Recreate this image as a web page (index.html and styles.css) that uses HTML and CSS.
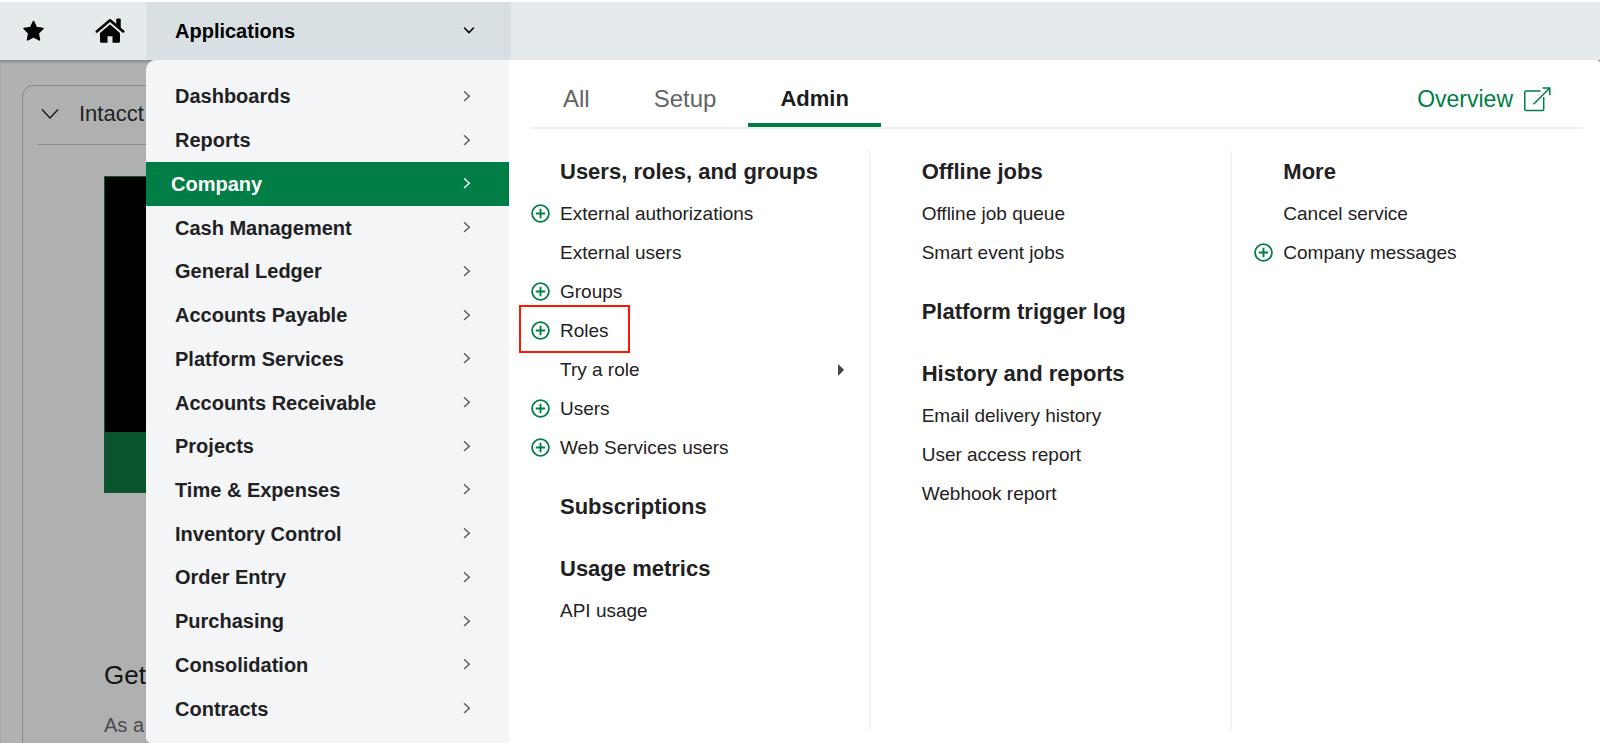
FILE: index.html
```html
<!DOCTYPE html>
<html lang="en">
<head>
<meta charset="utf-8">
<title>Applications</title>
<link rel="stylesheet" href="styles.css">
</head>
<body>
<svg class="defs" aria-hidden="true">
  <symbol id="right" viewBox="0 0 12 12"><path d="M3.500 .8 8.300 5.200 3.500 9.600" fill="none" stroke="currentColor" stroke-width="1.400" stroke-linecap="round"/></symbol>
  <symbol id="plus" viewBox="0 0 19 19"><circle cx="9.500" cy="9.500" r="8.400" fill="none" stroke="currentColor" stroke-width="1.800"/><path d="M9.500 4.800v9.400M4.800 9.500h9.400" stroke="currentColor" stroke-width="1.900"/></symbol>
</svg>
<header class="topbar">
  <button class="icon-btn" aria-label="Favorites"><svg width="22" height="22" viewBox="0 0 22 22"><path d="M11.500 1.500 14.400 7.600 21 8.500 16.200 13.100 17.400 19.900 11.500 16.700 5.600 19.900 6.800 13.100 2 8.500 8.600 7.600Z" fill="#000" stroke="#000" stroke-width="1.600" stroke-linejoin="round"/></svg></button>
  <a class="home" href="#" aria-label="Home"><svg width="30" height="26" viewBox="0 0 30 26"><path d="M1.800 13.400 15 2.300 28.200 13.400" fill="none" stroke="#000" stroke-width="2.600" stroke-linecap="round" stroke-linejoin="round"/><path d="M21.800 1h3.400v8.800l-3.400-2.900Z" fill="#000" stroke="#000" stroke-linejoin="round"/><path d="M15 6.600 5 15v8.200q0 1.500 1.500 1.500h6v-6.500h5v6.500h6q1.500 0 1.500-1.500V15Z" fill="#000"/></svg></a>
  <button class="app-btn" aria-expanded="true">Applications
    <svg width="12" height="12" viewBox="0 0 12 12"><path d="M1.500 3 6 7.600 10.500 3" fill="none" stroke="#000" stroke-width="1.500" stroke-linecap="round"/></svg>
  </button>
</header>
<main class="stage">
  <section class="workspace">
    <article class="card">
      <header class="card-head">
        <svg width="18" height="12" viewBox="0 0 18 12"><path d="M1 1.500 9 10 17 1.500" fill="none" stroke="#1c1c1c" stroke-width="1.500"/></svg>
        <span>Intacct</span>
      </header>
      <div class="card-body">
        <div class="promo"><div class="promo-screen"></div></div>
        <h2 class="promo-title">Get</h2>
        <p class="promo-text">As a</p>
      </div>
    </article>
  </section>

  <div class="menu">
    <nav class="apps" aria-label="Applications">
      <a href="#">Dashboards<svg class="chev"><use href="#right"/></svg></a>
      <a href="#">Reports<svg class="chev"><use href="#right"/></svg></a>
      <a href="#" class="current">Company<svg class="chev"><use href="#right"/></svg></a>
      <a href="#">Cash Management<svg class="chev"><use href="#right"/></svg></a>
      <a href="#">General Ledger<svg class="chev"><use href="#right"/></svg></a>
      <a href="#">Accounts Payable<svg class="chev"><use href="#right"/></svg></a>
      <a href="#">Platform Services<svg class="chev"><use href="#right"/></svg></a>
      <a href="#">Accounts Receivable<svg class="chev"><use href="#right"/></svg></a>
      <a href="#">Projects<svg class="chev"><use href="#right"/></svg></a>
      <a href="#">Time &amp; Expenses<svg class="chev"><use href="#right"/></svg></a>
      <a href="#">Inventory Control<svg class="chev"><use href="#right"/></svg></a>
      <a href="#">Order Entry<svg class="chev"><use href="#right"/></svg></a>
      <a href="#">Purchasing<svg class="chev"><use href="#right"/></svg></a>
      <a href="#">Consolidation<svg class="chev"><use href="#right"/></svg></a>
      <a href="#">Contracts<svg class="chev"><use href="#right"/></svg></a>
    </nav>

    <div class="panel">
      <div class="tabs">
        <button class="tab">All</button>
        <button class="tab">Setup</button>
        <button class="tab active">Admin</button>
        <a class="overview" href="#">Overview
          <svg width="28" height="26" viewBox="0 0 28 26"><path d="M17.500 4H3q-1.200 0-1.200 1.200V22.300q0 1.200 1.200 1.200H19.500q1.200 0 1.200-1.200V10M10.500 17.300 26.500 1.300M19.500 1H26.800V8.300" fill="none" stroke="currentColor" stroke-width="1.500"/></svg>
        </a>
      </div>
      <div class="columns">
        <div class="column">
          <section class="group">
            <h3>Users, roles, and groups</h3>
            <ul>
              <li><button class="add" aria-label="Add external authorization"><svg><use href="#plus"/></svg></button><a href="#">External authorizations</a></li>
              <li><a href="#">External users</a></li>
              <li><button class="add" aria-label="Add group"><svg><use href="#plus"/></svg></button><a href="#">Groups</a></li>
              <li class="marked"><button class="add" aria-label="Add role"><svg><use href="#plus"/></svg></button><a href="#">Roles</a></li>
              <li><a href="#">Try a role</a><svg class="more" viewBox="0 0 6 12"><path d="M0 1Q0 0 .8.700L5.500 5.300Q6 6 5.500 6.600L.8 11.200Q0 12 0 11Z" fill="#444"/></svg></li>
              <li><button class="add" aria-label="Add user"><svg><use href="#plus"/></svg></button><a href="#">Users</a></li>
              <li><button class="add" aria-label="Add Web Services user"><svg><use href="#plus"/></svg></button><a href="#">Web Services users</a></li>
            </ul>
          </section>
          <section class="group"><h3>Subscriptions</h3></section>
          <section class="group">
            <h3>Usage metrics</h3>
            <ul><li><a href="#">API usage</a></li></ul>
          </section>
        </div>
        <div class="column">
          <section class="group">
            <h3>Offline jobs</h3>
            <ul>
              <li><a href="#">Offline job queue</a></li>
              <li><a href="#">Smart event jobs</a></li>
            </ul>
          </section>
          <section class="group"><h3>Platform trigger log</h3></section>
          <section class="group">
            <h3>History and reports</h3>
            <ul>
              <li><a href="#">Email delivery history</a></li>
              <li><a href="#">User access report</a></li>
              <li><a href="#">Webhook report</a></li>
            </ul>
          </section>
        </div>
        <div class="column">
          <section class="group">
            <h3>More</h3>
            <ul>
              <li><a href="#">Cancel service</a></li>
              <li><button class="add" aria-label="Add company message"><svg><use href="#plus"/></svg></button><a href="#">Company messages</a></li>
            </ul>
          </section>
        </div>
      </div>
    </div>
  </div>
</main>
</body>
</html>
```

FILE: styles.css
```css
* { box-sizing: border-box; }
body {
  margin: 0;
  min-height: 100vh;
  display: flex;
  flex-direction: column;
  font-family: "Liberation Sans", Arial, sans-serif;
  font-size: 19px;
  color: #1f2123;
  background: #b1b1b1;
}
a { color: inherit; text-decoration: none; }
button { font: inherit; color: inherit; background: none; border: 0; padding: 0; text-align: left; }
svg { display: block; flex: none; }
h2, h3, p, ul { margin: 0; padding: 0; }
ul { list-style: none; }
.defs { position: absolute; width: 0; height: 0; }

/* Top bar */
.topbar {
  display: flex;
  align-items: center;
  height: 60px;
  padding-left: 22px;
  border-top: 2px solid #fff;
  background: #e5ebed;
}
.home { margin: 0 21px 0 51px; }
.app-btn {
  display: flex;
  align-items: center;
  justify-content: space-between;
  align-self: stretch;
  width: 365px;
  padding: 0 36px 0 29px;
  background: #d8e0e3;
  color: #000;
  font-size: 20px;
  font-weight: bold;
}

/* Dimmed page behind the menu */
.stage { position: relative; flex: 1; overflow: hidden; background: #b1b1b1; }
.workspace {
  min-height: 100%;
  padding: 25px 22px 0;
  box-shadow: inset 0 3px 3px -1px #858a8f;
}
.card {
  min-height: 720px;
  margin-bottom: -100px;
  padding: 0 15px;
  border: 1px solid #858a92;
  border-radius: 11px;
  background: #afb1b1;
}
.card-head {
  display: flex;
  align-items: center;
  gap: 20px;
  height: 59px;
  padding: 0 0 2px 3px;
  border-bottom: 1px solid #858a92;
  font-size: 22px;
}
.card-body { padding: 31px 66px 0; }
.promo {
  height: 317px;
  border: 1px solid #14552f;
  background: #0a552e;
}
.promo-screen { height: 255px; background: #000; }
.promo-title { margin-top: 164px; font-size: 26px; line-height: 36px; font-weight: normal; color: #141414; }
.promo-text { margin-top: 18px; font-size: 20px; line-height: 28px; color: #4a4a4a; }

/* Menu */
.menu {
  position: absolute;
  top: 0;
  right: 0;
  left: 146px;
  min-height: 100%;
  display: flex;
  overflow: hidden;
  border-radius: 10px 4px 0 6px;
  background: #fff;
}
.apps {
  display: flex;
  flex-direction: column;
  flex: none;
  width: 363px;
  padding: 15px 0 12px;
  background: #f3f5f7;
  font-size: 20px;
  font-weight: bold;
}
.apps a {
  flex: 1;
  display: flex;
  align-items: center;
  justify-content: space-between;
  padding: 0 36px 0 29px;
}
.apps .current { padding-left: 25px; background: #007e45; color: #fff; }
.chev { width: 12px; height: 12px; color: #55595c; }
.current .chev { color: #fff; }

.panel { flex: 1; display: flex; flex-direction: column; padding: 0 6px 10px 0; }
.tabs {
  display: flex;
  height: 69px;
  margin: 0 11px 20px 22px;
  border-bottom: 2px solid #f0f1f1;
}
.tab { padding: 15px 32px 0; border-bottom: 4px solid transparent; font-size: 24px; color: #626466; }
.tab.active { font-size: 22px; font-weight: bold; border-color: #007e45; color: #1a1c1e; }
.overview {
  display: flex;
  align-items: center;
  gap: 10px;
  margin-left: auto;
  padding: 12px 32px 0 0;
  font-size: 23px;
  color: #007e45;
}
.columns { flex: 1; display: grid; grid-template-columns: repeat(3, 1fr); }
.column { padding-left: 22px; border-right: 2px solid #f3f4f4; border-radius: 6px; }
.column:last-child { border-right: 0; }
.group + .group { margin-top: 17px; }
.group h3 { padding-left: 29px; font-size: 22px; line-height: 45px; white-space: nowrap; }
.group li { position: relative; display: flex; align-items: center; gap: 10px; height: 39px; }
.group li > a:first-child { margin-left: 29px; }
.add svg { width: 19px; height: 19px; color: #007e45; }
.more { width: 6px; height: 12px; margin: 0 25px 0 auto; }
.marked::after {
  content: "";
  position: absolute;
  box-sizing: border-box;
  top: -6px;
  left: -12px;
  width: 111px;
  height: 48px;
  border: 2px solid #ff1600;
  pointer-events: none;
}
```
